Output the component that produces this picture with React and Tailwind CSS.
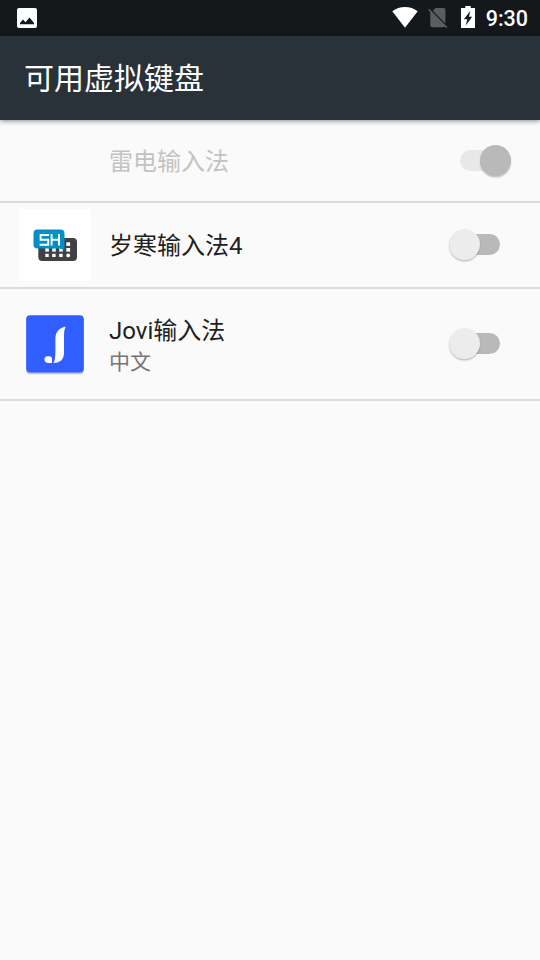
import { clsx } from 'clsx';

function PictureIcon() {
  return (
    <svg width="20" height="20" viewBox="0 0 20 20" className="block">
      <rect width="20" height="20" rx="2" fill="#fff" />
      <path d="M3 16.2V15l3-3.6 2.5 2.8 4-4.6 4.5 5.4v1.2z" fill="#14181b" />
    </svg>
  );
}

function WifiIcon() {
  return (
    <svg width="26" height="21" viewBox="0 0 26 21" className="block">
      <path d="M0.3 4.3C4 1.4 8.3 0 13 0s9 1.4 12.7 4.3L13 20.7z" fill="#fff" />
    </svg>
  );
}

function NoSimIcon() {
  return (
    <svg width="20" height="20" viewBox="0 0 20 20" className="block">
      <path d="M7.6 0H15.7a1.7 1.7 0 0 1 1.7 1.7V15.4L4.8 2.8z" fill="#5b5e60" />
      <path d="M2.3 3.2L17.2 18.1a1.7 1.7 0 0 1-1.5 1.1H4a1.7 1.7 0 0 1-1.7-1.7z" fill="#5b5e60" />
      <path d="M0.6 1.2L18.8 19.5" stroke="#5b5e60" strokeWidth="1.6" />
    </svg>
  );
}

function BatteryIcon() {
  return (
    <svg width="14" height="22" viewBox="0 0 14 22" className="block">
      <path d="M4.3 0h5.4v2H14v20H0V2h4.3z" fill="#fff" />
      <path d="M9.2 5L2.9 13.2h3.4L4.7 19.4l6.5-8.7H8z" fill="#14181b" />
    </svg>
  );
}

function SuihanIcon() {
  return (
    <svg width="72" height="72" viewBox="0 0 72 72" className="block bg-white">
      <rect x="19.3" y="29" width="38.7" height="23" rx="4" fill="#414042" />
      <g fill="#fff">
        <rect x="47.3" y="33.3" width="3.8" height="3.6" />
        <rect x="26.3" y="39" width="3.6" height="3.6" />
        <rect x="33.2" y="39" width="3.6" height="3.6" />
        <rect x="40.2" y="39" width="3.6" height="3.6" />
        <rect x="47.3" y="39" width="3.8" height="3.6" />
        <rect x="26.3" y="44.8" width="3.4" height="3.2" />
        <rect x="33.2" y="44.8" width="3.4" height="3.2" />
        <rect x="40.2" y="44.8" width="3.4" height="3.2" />
        <circle cx="49.2" cy="46.4" r="1.9" />
      </g>
      <path
        d="M18.5 20.4h23a4 4 0 0 1 4 4v16.4l-5.2-1.2H18.5a4 4 0 0 1-4-4V24.4a4 4 0 0 1 4-4z"
        fill="#0090c5"
      />
      <path
        d="M30.2 26H21.6V30.8H29.2v4.9H20.6M32.6 25V36.6M40 25V36.6M32.6 30.8H40"
        fill="none"
        stroke="#fff"
        strokeWidth="1.9"
      />
    </svg>
  );
}

function JoviIcon() {
  return (
    <svg width="72" height="72" viewBox="0 0 72 72" className="block">
      <rect x="7.2" y="8.2" width="57.6" height="58" rx="4" fill="#c3c3c8" />
      <rect x="7.2" y="7.3" width="57.6" height="57.2" rx="4" fill="#315eff" />
      <path
        d="M46.6 18.4C40 20 36.4 24 36.4 30.5v12.5c0 5.8-.4 9.6-2 12 7.4-.3 10.6-4 10.6-10.6V29c0-4.4.3-7.4 1.6-10.6z"
        fill="#fff"
      />
      <path d="M28.4 48.2h1.8c1.8 0 2.8 1 2.8 2.8v4h-3.6c-2.6 0-3.9-1.2-3.9-3.4s1.1-3.4 2.9-3.4z" fill="#fff" />
    </svg>
  );
}

function Switch({ checked, disabled }) {
  return (
    <button
      role="switch"
      aria-checked={checked}
      disabled={disabled}
      className={clsx('flex h-[31px] w-[51px] items-center', checked ? 'justify-end' : 'mb-0.5 justify-start')}
    >
      <span
        className={clsx(
          'flex h-[21px] w-[51px] items-center rounded-full',
          checked ? 'justify-end bg-[#e8e8e8]' : 'justify-start bg-[#b9b9b9]'
        )}
      >
        <span
          className={clsx(
            'size-[31px] shrink-0 rounded-full shadow-[0_1.5px_1.5px_rgba(0,0,0,0.22)]',
            checked ? 'bg-[#b9b9b9]' : 'bg-[#ececec]'
          )}
        />
      </span>
    </button>
  );
}

function KeyboardRow({ icon: Icon, name, subtitle, checked, disabled, className }) {
  return (
    <li className={clsx('flex items-center border-b-2 border-[#dadada] pl-[19px]', className)}>
      <div className="size-[72px] shrink-0">{Icon && <Icon />}</div>
      <div className={clsx('ml-[18px] min-w-0 flex-1', subtitle ? 'pt-1' : 'pt-0.5')}>
        <div className={clsx('text-[24px] leading-8', disabled ? 'text-[#c3c3c3]' : 'text-[#212121]')}>{name}</div>
        {subtitle && <div className="text-[21px] leading-[30px] text-[#757575]">{subtitle}</div>}
      </div>
      <Switch checked={checked} disabled={disabled} />
    </li>
  );
}

export default function App() {
  return (
    <div className="flex h-[960px] w-[540px] flex-col overflow-hidden bg-[#fafafa] font-[Roboto,'Noto_Sans_CJK_SC',sans-serif]">
      <div className="flex h-9 shrink-0 items-start bg-[#14181b] pl-[17px] text-white">
        <div className="pt-2">
          <PictureIcon />
        </div>
        <div className="ml-auto flex items-start pr-3">
          <div className="pt-[7px]">
            <WifiIcon />
          </div>
          <div className="ml-2.5 pt-2">
            <NoSimIcon />
          </div>
          <div className="ml-[13px] pt-1.5">
            <BatteryIcon />
          </div>
          <span className="ml-[11px] pt-[3px] text-[21.5px] leading-8 font-medium">9:30</span>
        </div>
      </div>

      <header className="z-10 flex h-[84px] shrink-0 items-center bg-[#283238] pt-0.5 pl-6 shadow-[0_1px_5px_rgba(0,0,0,0.45)]">
        <h1 className="text-[30px] leading-10 text-white">可用虚拟键盘</h1>
      </header>

      <ul>
        <KeyboardRow name="雷电输入法" checked disabled className="h-[83px] pr-[29px]" />
        <KeyboardRow icon={SuihanIcon} name="岁寒输入法4" className="h-[86px] pr-10" />
        <KeyboardRow icon={JoviIcon} name="Jovi输入法" subtitle="中文" className="h-28 pr-10" />
      </ul>
    </div>
  );
}
